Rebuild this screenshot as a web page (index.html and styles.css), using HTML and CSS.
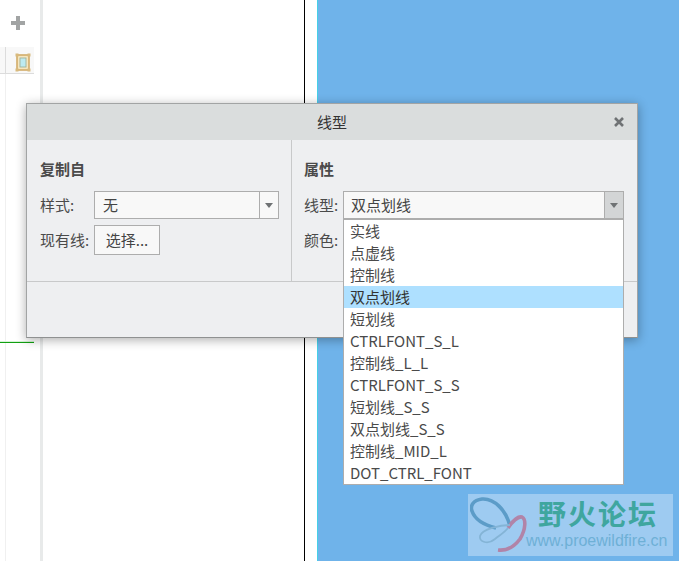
FILE: index.html
```html
<!DOCTYPE html>
<html lang="zh-CN">
<head>
<meta charset="utf-8">
<title>线型</title>
<link rel="stylesheet" href="styles.css">
</head>
<body>
<div class="app">
  <aside class="side">
    <div class="side-top">
      <svg class="plus" width="16" height="16" viewBox="0 0 16 16"><path d="M6 1h4v5h5v4h-5v5H6v-5H1V6h5z" fill="#a2a4a4"/></svg>
    </div>
    <div class="tool-row">
      <div class="tool-cell">
        <svg width="16" height="19" viewBox="0 0 16 19"><rect x="2" y="2" width="12" height="15" fill="#f5e6bf" stroke="#d2ac68" stroke-width="1.6"/><rect x="5" y="5" width="6" height="9" fill="#bdeaf0" stroke="#9fb39c" stroke-width=".9"/><rect x="0.5" y="0.5" width="3" height="3" fill="#d8ba7e"/><rect x="12.5" y="0.5" width="3" height="3" fill="#d8ba7e"/><rect x="0.5" y="15.5" width="3" height="3" fill="#d8ba7e"/><rect x="12.5" y="15.5" width="3" height="3" fill="#d8ba7e"/></svg>
      </div>
    </div>
    <div class="side-rest"><div class="green-line"></div></div>
  </aside>
  <div class="divider"></div>
  <main class="canvas"></main>
  <div class="blue"></div>
</div>

<section class="dialog">
  <header class="title-bar">
    <span class="title">线型</span>
    <svg class="close" width="12" height="12" viewBox="0 0 12 12"><path d="M2 2l8 8M10 2l-8 8" stroke="#6f7274" stroke-width="2.6"/></svg>
  </header>
  <div class="panels">
    <div class="panel panel-left">
      <h2 class="heading">复制自</h2>
      <div class="row">
        <span class="label">样式:</span>
        <div class="combo combo-left"><span class="combo-text">无</span><span class="arrow-box"><i class="arrow"></i></span></div>
      </div>
      <div class="row row-btn">
        <span class="label label-wide">现有线:</span>
        <button class="btn">选择...</button>
      </div>
    </div>
    <div class="panel panel-right">
      <h2 class="heading">属性</h2>
      <div class="row">
        <span class="label">线型:</span>
        <div class="combo combo-right"><span class="combo-text">双点划线</span><span class="arrow-box active"><i class="arrow"></i></span></div>
      </div>
      <div class="row row-color">
        <span class="label">颜色:</span>
      </div>
    </div>
  </div>
  <footer class="footer"></footer>
</section>

<ul class="menu">
  <li>实线</li>
  <li>点虚线</li>
  <li>控制线</li>
  <li class="selected">双点划线</li>
  <li>短划线</li>
  <li>CTRLFONT_S_L</li>
  <li>控制线_L_L</li>
  <li>CTRLFONT_S_S</li>
  <li>短划线_S_S</li>
  <li>双点划线_S_S</li>
  <li>控制线_MID_L</li>
  <li>DOT_CTRL_FONT</li>
</ul>

<div class="watermark">
  <svg class="wm-logo" width="60" height="60" viewBox="0 0 60 60" fill="none">
    <path d="M40 30C36 14 24 2 12 3C3 4 0 10 2 15C5 24 14 29 26 32" stroke="#5c9cc8" stroke-width="3.6"/>
    <path d="M38 32C42 26 48 20 52 21C56 23 56 33 50 43C44 51 36 55 28 54" stroke="#b184a8" stroke-width="3.6"/>
    <path d="M40 29C30 29 12 33 10 40C9 46 18 49 25 43C30 39 35 36 38 32" stroke="#84b4d6" stroke-width="1.8"/>
  </svg>
  <div class="wm-text">
    <div class="wm-name">野火论坛</div>
    <div class="wm-url">www.proewildfire.cn</div>
  </div>
</div>
</body>
</html>
```
FILE: styles.css
```css
* { box-sizing: border-box; }
html, body { margin: 0; padding: 0; height: 100%; overflow: hidden; }
body {
  position: relative;
  width: 679px;
  height: 561px;
  background: #fff;
  font-family: "Noto Sans CJK SC", "Liberation Sans", sans-serif;
  font-size: 15px;
  color: #444;
}
.app { display: flex; height: 561px; }
.side { width: 40px; flex: none; display: flex; flex-direction: column; }
.side-top { height: 47px; display: flex; align-items: flex-start; justify-content: flex-start; padding: 15px 0 0 10px; }
.plus { display: block; }
.tool-row { height: 27px; width: 34px; background: #f8f8f8; border-bottom: 1px solid #dcdcdc; padding-left: 5px; }
.tool-cell { height: 26px; border-left: 1px solid #dcdcdc; padding: 6px 0 0 9px; }
.tool-cell svg { display: block; }
.side-rest { flex: 1; position: relative; margin-left: 5px; width: 29px; border-left: 1px solid #f0f0f0; }
.green-line { position: absolute; left: -6px; top: 268px; width: 34px; height: 1px; background: #12a012; box-shadow: 0 -1px 0 #d6f3d6; }
.divider { width: 3px; flex: none; background: #e8eaea; }
.canvas { width: 262px; flex: none; border-right: 1px solid #000; margin-right: 12px; background: #fff; }
.blue { flex: 1; background: #6fb3ea; border-left: 1px solid #45d0e8; }

.dialog {
  position: absolute; left: 26px; top: 103px; width: 612px; height: 235px;
  background: #eeeff1; border: 1px solid #a2a4a4; border-bottom-color: #8f9191;
  box-shadow: 0 2px 10px rgba(0,0,0,.32);
  display: flex; flex-direction: column;
}
.title-bar { height: 36px; flex: none; background: #dadddd; display: flex; align-items: center; justify-content: center; position: relative; }
.title { font-size: 15px; line-height: 20px; margin-top: -1px; color: #333; }
.close { position: absolute; right: 12px; top: 12px; }
.panels { height: 142px; flex: none; display: flex; border-bottom: 1px solid #c8c9ca; }
.panel { padding: 19px 0 0 13px; }
.panel-left { width: 265px; flex: none; border-right: 1px solid #c8c9ca; }
.panel-right { flex: 1; padding-left: 12px; }
.heading { margin: 0 0 12px; font-size: 15px; font-weight: 700; line-height: 20px; color: #4a4a4a; }
.row { display: flex; align-items: center; height: 28px; }
.row-btn { margin-top: 7px; }
.row-color { margin-top: 7px; }
.label { width: 54px; flex: none; line-height: 20px; color: #4a4a4a; }
.panel-right .label { width: 39px; }
.label-wide { white-space: nowrap; }
.combo { height: 28px; display: flex; border: 1px solid #adadad; background: #f8f8f8; }
.combo-left { width: 185px; }
.combo-right { width: 281px; }
.combo-text { flex: 1; padding-left: 8px; line-height: 25px; color: #444; }
.combo-right .combo-text { padding-left: 7px; }
.arrow-box { width: 19px; flex: none; border-left: 1px solid #adadad; display: flex; align-items: center; justify-content: center; }
.arrow-box.active { background: #d3d5d6; }
.arrow { display: block; width: 0; height: 0; border-left: 4.5px solid transparent; border-right: 4.5px solid transparent; border-top: 5px solid #6f7274; }
.btn {
  width: 66px; height: 30px; padding: 0 0 2px; margin: 0;
  border: 1px solid #adadad; background: #f8f8f8;
  font: inherit; color: #444;
}
.footer { flex: 1; }

.menu {
  position: absolute; left: 343px; top: 219px; width: 281px; height: 266px;
  margin: 0; padding: 0; list-style: none;
  background: #fff; border: 1px solid #adadad;
}
.menu li { height: 22px; line-height: 22px; padding-left: 6px; color: #4a4a4a; white-space: nowrap; font-size: 15px; }
.menu li.selected { background: #aee0ff; color: #333; }

.watermark {
  position: absolute; left: 468px; top: 494px; width: 205px; height: 62px;
  background: #9ecbf1; display: flex;
}
.wm-logo { position: absolute; left: 2px; top: 2px; }
.wm-text { width: 205px; }
.wm-name { margin: 1px 0 0 70px; font-size: 28px; font-weight: 700; line-height: 36px; letter-spacing: 2px; color: #3fa69f; white-space: nowrap; }
.wm-url { margin: 0 0 0 58px; font-family: "Liberation Sans", sans-serif; font-size: 16px; line-height: 20px; color: #6eb0d6; white-space: nowrap; }
```
